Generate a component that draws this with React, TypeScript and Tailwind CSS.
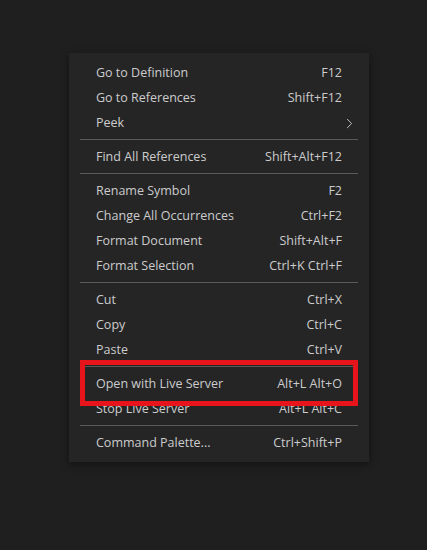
import { ChevronRight } from 'lucide-react';

type Item = { label: string; keys?: string; submenu?: boolean };

const groups: Item[][] = [
  [
    { label: 'Go to Definition', keys: 'F12' },
    { label: 'Go to References', keys: 'Shift+F12' },
    { label: 'Peek', submenu: true },
  ],
  [{ label: 'Find All References', keys: 'Shift+Alt+F12' }],
  [
    { label: 'Rename Symbol', keys: 'F2' },
    { label: 'Change All Occurrences', keys: 'Ctrl+F2' },
    { label: 'Format Document', keys: 'Shift+Alt+F' },
    { label: 'Format Selection', keys: 'Ctrl+K Ctrl+F' },
  ],
  [
    { label: 'Cut', keys: 'Ctrl+X' },
    { label: 'Copy', keys: 'Ctrl+C' },
    { label: 'Paste', keys: 'Ctrl+V' },
  ],
  [
    { label: 'Open with Live Server', keys: 'Alt+L Alt+O' },
    { label: 'Stop Live Server', keys: 'Alt+L Alt+C' },
  ],
  [{ label: 'Command Palette...', keys: 'Ctrl+Shift+P' }],
];

function MenuRow({ item }: { item: Item }) {
  return (
    <div className="flex h-[25px] items-center pl-[27px] pr-[27px] pt-[2px] text-[12.5px] text-[#cccccc]">
      <span className="flex-1">{item.label}</span>
      {item.keys && <span>{item.keys}</span>}
      {item.submenu && (
        <ChevronRight className="-mr-[16px] text-[#cccccc]" size={17} strokeWidth={1.3} />
      )}
    </div>
  );
}

export default function App() {
  return (
    <div className="h-[550px] w-[427px] bg-[#1f1f1f] pl-[69px] pt-[53px] font-['Open_Sans',sans-serif]">
      <div className="relative w-[300px] bg-[#252526] py-[7px] shadow-[0_2px_8px_rgba(0,0,0,0.45)]">
        {groups.map((g, gi) => (
          <div key={gi}>
            {gi > 0 && (
              <div className="flex h-[9px] items-center px-[11px]">
                <div className="h-px w-full bg-[#5a5a5a]" />
              </div>
            )}
            {g.map((item) => (
              <MenuRow key={item.label} item={item} />
            ))}
          </div>
        ))}

        {/* annotation box */}
        <div className="pointer-events-none absolute left-[11px] top-[307px] h-[46px] w-[278px] border-[5px] border-[#e8141c]" />
      </div>
    </div>
  );
}
